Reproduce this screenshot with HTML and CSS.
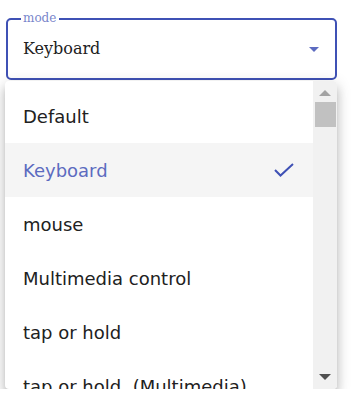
FILE: index.html
```html
<!DOCTYPE html>
<html>
<head>
<meta charset="utf-8">
<link rel="stylesheet" href="styles.css">
</head>
<body>
<div class="page">
  <div class="field">
    <span class="label">mode</span>
    <span class="value">Keyboard</span>
    <span class="caret"></span>
  </div>
  <div class="menu">
    <ul class="list">
      <li class="item">Default</li>
      <li class="item selected">Keyboard
        <svg class="check" width="20" height="14" viewBox="0 0 20 14"><path d="M1 7 L6.5 12.5 L19 1" fill="none" stroke="#3f51b5" stroke-width="2"/></svg>
      </li>
      <li class="item">mouse</li>
      <li class="item">Multimedia control</li>
      <li class="item">tap or hold</li>
      <li class="item">tap or hold&nbsp; (Multimedia)</li>
    </ul>
    <div class="scrollbar">
      <span class="arrow up"></span>
      <span class="thumb"></span>
      <span class="track"></span>
      <span class="arrow down"></span>
    </div>
  </div>
</div>
</body>
</html>
```
FILE: styles.css
```css
html, body {
  margin: 0;
  padding: 0;
  background: #fff;
}
.page {
  padding: 18px 22px 0 5px;
  width: 332px;
}
.field {
  position: relative;
  margin-left: 1px;
  height: 62px;
  box-sizing: border-box;
  border: 2px solid #3f51b5;
  border-radius: 5px;
  display: flex;
  align-items: center;
  padding: 0 16px 0 15px;
}
.label {
  position: absolute;
  top: -10px;
  left: 13px;
  padding: 0 3px 0 2px;
  background: #fff;
  font-family: "DejaVu Serif", serif;
  font-size: 12px;
  line-height: 16px;
  color: #7986cb;
}
.value {
  flex: 1;
  font-family: "DejaVu Serif", serif;
  font-size: 16px;
  color: #212121;
  margin-top: -2px;
}
.caret {
  width: 0;
  height: 0;
  border-left: 5px solid transparent;
  border-right: 5px solid transparent;
  border-top: 5px solid #5c6bc0;
  margin-top: 1px;
}
.menu {
  position: relative;
  margin-top: 1px;
  height: 308px;
  display: flex;
  background: #fff;
  border-radius: 4px;
  box-shadow: 0 5px 5px -3px rgba(0,0,0,.2), 0 8px 10px 1px rgba(0,0,0,.14), 0 3px 14px 2px rgba(0,0,0,.12);
  overflow: hidden;
}
.list {
  list-style: none;
  margin: 0;
  padding: 8px 0 0 0;
  flex: 1;
  overflow: hidden;
}
.item {
  height: 54px;
  display: flex;
  align-items: center;
  justify-content: space-between;
  padding: 0 19px 0 18px;
  font-family: "DejaVu Sans", sans-serif;
  font-size: 18px;
  color: #212121;
  white-space: nowrap;
}
.item.selected {
  background: #f5f5f5;
  color: #5c6bc0;
}
.check {
  display: block;
}
.scrollbar {
  width: 24px;
  background: #f1f1f1;
  display: flex;
  flex-direction: column;
  align-items: center;
}
.arrow {
  width: 0;
  height: 0;
  border-left: 6px solid transparent;
  border-right: 6px solid transparent;
}
.arrow.up {
  margin-top: 9px;
  border-bottom: 6px solid #a3a3a3;
}
.arrow.down {
  margin-bottom: 9px;
  border-top: 6px solid #505050;
}
.thumb {
  margin-top: 6px;
  width: 21px;
  height: 25px;
  background: #c1c1c1;
}
.track {
  flex: 1;
}
```
